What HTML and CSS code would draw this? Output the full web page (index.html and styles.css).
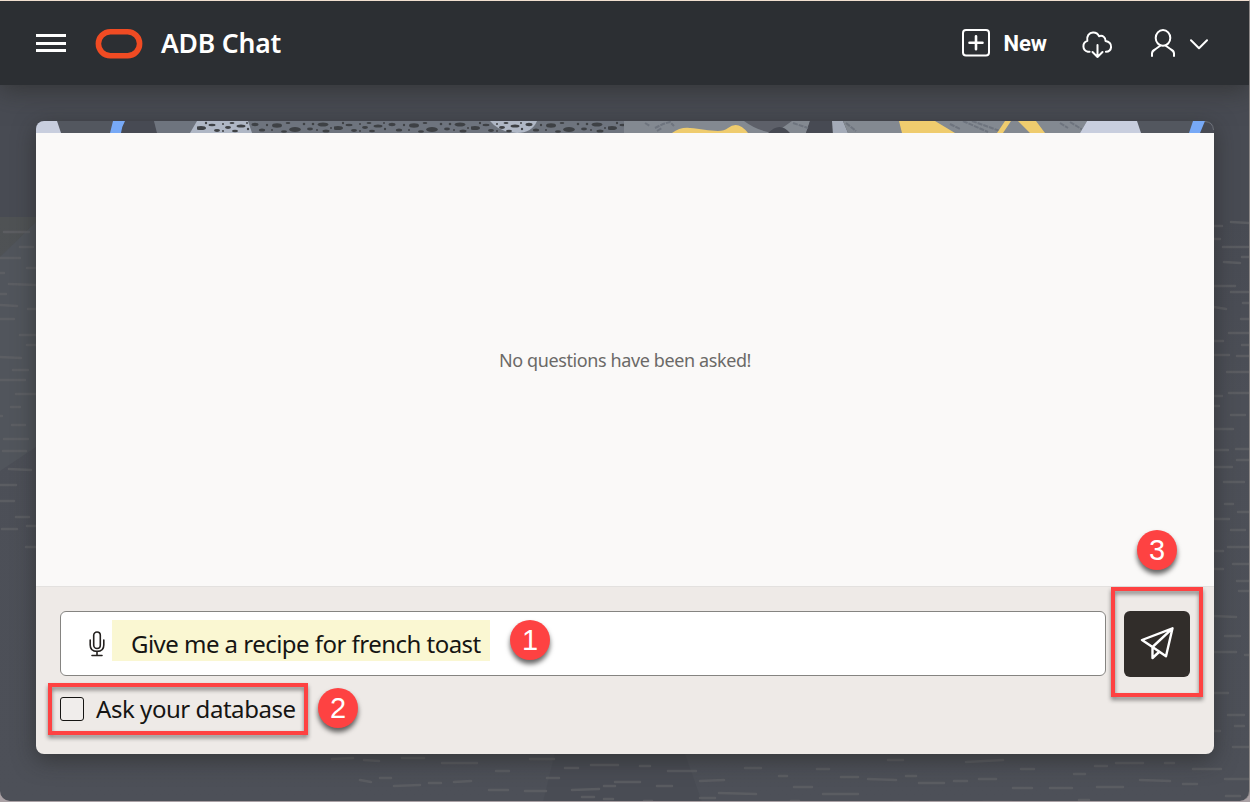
FILE: index.html
```html
<!DOCTYPE html>
<html lang="en">
<head>
<meta charset="utf-8">
<title>ADB Chat</title>
<link rel="stylesheet" href="styles.css">
</head>
<body>
<div class="app">
  <svg class="texture" viewBox="0 0 1250 802" aria-hidden="true">
    <defs><linearGradient id="fade" x1="0" y1="0" x2="0" y2="1"><stop offset="0" stop-color="#4f5254"/><stop offset="1" stop-color="#4e5158"/></linearGradient></defs>
    <path fill="url(#fade)" d="M0 217H36V400H0Z"/>
    <path class="facet" d="M0 257 36 222V447L0 471Z"/>
    <path class="facet-dark" d="M558 740 543 802H702L680 740Z"/>
    <path class="strokes" d="M4 232h25M20 247h13M0 258h20M27 268h9M0 273h4M9 284l27 1M0 294h6M0 305l17 1M28 309h8M0 319h14M20 335h16M27 345h9M0 357l21 1M13 370h15M0 380h25M16 394h20M11 407h9M0 416h2M12 425h13M4 439h24M3 451h23M9 469l22 1M0 485h16M0 501h14M16 517h13M27 526h9M2 529h15M26 547h10
    M1231 222l19 1M1214 226h8M1214 239h6M1223 247h25M1224 262l16 1M1242 257h8M1214 286h21M1231 292h17M1214 307l12 2M1243 303h7M1241 319h9M1229 333h21M1214 341h9M1242 345h8M1214 355h15M1237 356h13M1227 372h22M1229 393h20M1214 396h8M1214 406h5M1231 415h14M1214 429h19M1214 450h14M1236 449h14M1237 460h12M1214 467h18M1224 482h20M1225 504h8M1238 512h12M1214 519h15M1231 530h14M1228 547h22M1214 551h9M1233 564h17M1214 569h9M1237 581h13M1239 591h10M1214 616l22 1M1225 636h15M1214 652h22M1245 655h5M1214 693h14M1228 715h16M1235 726h9M1214 731h6M1233 747h17
    M332 759l21 -1M364 760l15 1M402 758h22M442 763h35M360 780l11 2M380 778h11M394 786l26 -1M429 783h12M454 782l17 -1M496 771h13M530 759h24M489 790h19M525 791h21M420 804l16 1M458 805l30 -1M547 778h12M565 768h13M591 765h27M615 782h25M572 790l27 -1M640 766h10M668 771h28M745 768h16M817 769h12M888 760h15M966 762l37 -2M700 781l24 -1M657 786h15M719 793l37 1M794 787h18M823 794h35M841 777h17M868 779l28 1M906 776h10M919 783h25M954 781h13M979 779h17M1021 769h13M1074 774h11M1095 766h12M1116 763h27M1165 763h9M1193 769h28M1013 788h19M1050 788h22M1097 787h26M1140 780l30 1M1183 784h14M1225 779h25M779 776h8
    M420 804.500h15M458 805l30-1M604 786h11M554 803h10M604 799h9M582 797h12M501 810h28M422 804.500h14M460 804.500h28M700 798h15M644 801h8M791 801h8M893 802h16M929 802h31M983 802h29M1026 807h28M1079 800h10M1129 807h10M1169 807h26M1226 796h14"/>
  </svg>

  <header class="topbar">
    <svg class="menu" viewBox="0 0 30 18"><path d="M0 1.5H30M0 9.5H30M0 16.5H30"/></svg>
    <svg class="logo" viewBox="0 0 48 31"><rect x="3.4" y="3.7" width="41.2" height="24" rx="12"/></svg>
    <h1 class="title">ADB Chat</h1>
    <nav class="actions">
      <svg class="icon plus" viewBox="0 0 28 28"><rect x="1" y="1" width="26" height="25.5" rx="3"/><path class="bold" d="M7.5 13.7H20.5M14 7.200V20.200"/></svg>
      <span class="new">New</span>
      <svg class="icon cloud" viewBox="0 0 32 28"><path d="M8.6 20.7H6.8A5.6 5.6 0 0 1 6.3 9.9C5.400 5 8.200 1.600 12 1.400c2.800-.1 5 1.400 6 3.800 3.700-1.200 6.700 1.100 6.500 4.700 3.500.6 5.900 3 5.600 6.200-.3 2.900-2.300 4.600-5.200 4.700M16.500 14V26M11.500 21l5 5 5-5"/></svg>
      <svg class="icon user" viewBox="0 0 26 28"><ellipse cx="13" cy="8.9" rx="7.3" ry="7.9"/><path d="M2 27V24.500Q2 22 5 20.500L10.500 16.500M24 27V24.500Q24 22 21 20.500L15.500 16.500"/></svg>
      <svg class="icon chevron" viewBox="0 0 18 11"><path d="M1 1.300 9 9.300 17 1.300"/></svg>
    </nav>
  </header>

  <main class="card">
    <svg class="ribbon" viewBox="36 121 1178 12" preserveAspectRatio="none">
      <defs>
        <pattern id="pebbles" width="137" height="12" x="197" y="121" patternUnits="userSpaceOnUse">
          <g fill="#3e4145"><ellipse cx="4" cy="7" rx="5" ry="2"/><ellipse cx="15" cy="4" rx="3.5" ry="1.2"/><ellipse cx="20" cy="9.5" rx="3" ry="1.4"/><ellipse cx="31" cy="6.5" rx="3" ry="1.4"/><ellipse cx="38" cy="10" rx="3" ry="1.3"/><ellipse cx="44" cy="5" rx="4.5" ry="1.6"/><ellipse cx="35" cy="2" rx="2.5" ry="1"/><ellipse cx="58" cy="3.5" rx="3.5" ry="1.7"/><ellipse cx="65" cy="9" rx="3.2" ry="1.6"/><ellipse cx="80" cy="4.5" rx="5" ry="2.2"/><ellipse cx="98" cy="8.5" rx="5.8" ry="2.6"/><ellipse cx="87" cy="10.5" rx="3" ry="1.2"/><ellipse cx="91" cy="2" rx="2.4" ry="1"/><ellipse cx="113" cy="8" rx="3" ry="1.4"/><ellipse cx="126" cy="3.5" rx="5.5" ry="2"/><ellipse cx="129" cy="10" rx="3.5" ry="1.5"/><circle cx="9" cy="2" r="1.2"/><circle cx="26" cy="3" r="1"/><circle cx="26" cy="10" r="1"/><circle cx="51" cy="8" r="1.2"/><circle cx="50" cy="2" r="1"/><circle cx="70" cy="4" r="1.2"/><circle cx="75" cy="9" r="1"/><circle cx="107" cy="3" r="1.3"/><circle cx="116" cy="3" r="1.3"/><circle cx="120" cy="9" r="1"/><circle cx="134" cy="7" r="1"/></g>
        </pattern>
      </defs>
      <path fill="#53575f" d="M36 121H1214V133H36Z"/>
      <path fill="#c8cede" d="M36 121H57L61 133H36Z"/>
      <path fill="#474a53" d="M120 121H154L157 133H110Z"/>
      <path fill="#77a9f6" d="M113 121H125Q122 126 121 133H110Z"/>
      <path fill="#6e747e" d="M154 121H630V133H157Z"/>
      <path fill="#afb7c5" d="M197 121H248L252 133H190Z"/>
      <path fill="#afb7c5" d="M490 121H537Q532 133 517 133 499 132 490 121Z"/>
      <path fill="url(#pebbles)" d="M197 121H624V133H197Z"/>
      <path fill="#838991" d="M624 121H810L806 133H624Z"/>
      <path fill="#5d6069" d="M744 121H792L775 133Q759 132 744 121Z"/>
      <path fill="#474a53" d="M768 133Q780 121 790 133ZM810 121H832V133H806Z"/>
      <path fill="#efcc6e" d="M672 133Q680 127 690 128C705 129 722 134 728 128Q738 120 748 133Z"/>
      <path class="hatch" d="M645 123l5 3M655 128l8-4 7-2 4 4M657 131l5-3M793 123l15 5"/>
      <path fill="#a4abb8" d="M832 121H843L848 133H833Z"/>
      <path fill="#838991" d="M843 121H1087L1080 133H848Z"/>
      <path class="hatch" d="M846 123l10 8M950 124l10 5M963 121l25 11M972 121l28 10M1060 123l8 5M1070 122l13 8"/>
      <path fill="#efcc6e" d="M899 121H935L955 133H902ZM1005 121H1011L1003 133H997ZM1018 121H1036L1045 133H1030Z"/>
      <path fill="#c8cede" d="M1087 121H1137L1141 133H1080Z"/>
      <path fill="#474a53" d="M1200 121H1214V133H1198Z"/>
      <path fill="#77a9f6" d="M1193 121H1205L1200 133H1189Z"/>
      <path class="corner" d="M1205 121.5Q1213 122 1213.5 130"/>
    </svg>
    <section class="conversation">No questions have been asked!</section>
    <footer class="composer">
      <div class="ask-row">
        <div class="field">
          <svg class="mic" viewBox="0 0 16 26"><rect x="4.7" y="1" width="6.6" height="16.5" rx="3.3"/><path d="M1.2 9V14Q1.2 20.4 8 20.4T14.8 14V9M8 20.5V24.5M3 24.5H13"/></svg>
          <span class="prompt">Give me a recipe for french toast</span>
          <span class="badge badge-one">1</span>
        </div>
        <div class="send">
          <svg viewBox="0 0 34 34"><path d="M2 13 32.5 1.3 26 29.3 12.5 20ZM12.5 20 32.5 1.3M12.5 20V31L19 25"/></svg>
        </div>
      </div>
      <label class="option"><span class="box"></span><span class="option-text">Ask your database</span></label>
    </footer>
  </main>

  <div class="outline outline-option"></div>
  <div class="outline outline-send"></div>
  <span class="badge badge-two">2</span>
  <span class="badge badge-three">3</span>
</div>
</body>
</html>
```
FILE: styles.css
```css
* { box-sizing: border-box; }
body { margin: 0; background: #aaa1a5; font-family: "Noto Sans", "Open Sans", sans-serif; }
.app {
  position: relative; width: 1250px; height: 801px; overflow: hidden;
  background: linear-gradient(#484b53 0, #484b53 217px, #4c4f57 400px, #4d5058 100%);
  border-top: 1px solid #f1dfd0; border-right: 1px solid #8d8988;
  border-radius: 0 0 10px 10px;
}
.texture { position: absolute; left: 0; top: -1px; width: 1250px; height: 802px; }
.facet { fill: #51555c; }
.facet-dark { fill: #494c54; }
.strokes { fill: none; stroke: #606265; stroke-width: 2.6; stroke-linecap: round; opacity: .75; }

.topbar {
  position: relative; height: 84px; display: flex; align-items: center;
  padding: 0 41px 0 36px; background: #2c2f33; color: #fff;
  box-shadow: 0 5px 24px rgba(40, 40, 36, .6);
}
.topbar svg { fill: none; stroke: #fff; flex: none; }
.menu { width: 30px; height: 18px; stroke-width: 3; }
.topbar .logo { width: 48px; height: 31px; margin: 1px 18px 0 29px; stroke: #f04b23; stroke-width: 5.6; }
.title { margin: 0; font-size: 26.5px; line-height: 36px; font-weight: 600; letter-spacing: -.2px; white-space: nowrap; }
.actions { margin-left: auto; display: flex; align-items: center; }
.icon { stroke-width: 2; stroke-linecap: round; stroke-linejoin: round; }
.bold { stroke-width: 2.6; }
.plus { width: 28px; height: 28px; }
.new { margin: 2px 34px 0 13px; font-family: Roboto, sans-serif; font-size: 22px; line-height: 28px; font-weight: 700; }
.cloud { width: 32px; height: 28px; margin: 3px 37px 0 0; }
.user { width: 26px; height: 28px; margin-right: 14px; }
.chevron { width: 18px; height: 11px; margin-top: 2px; }

.card {
  position: relative; display: flex; flex-direction: column;
  width: 1178px; height: 633px; margin: 36px 0 0 36px;
  border-radius: 8px; overflow: hidden;
  box-shadow: 0 6px 22px rgba(35, 35, 32, .55);
}
.ribbon { display: block; width: 1178px; height: 12px; flex: none; }
.hatch { fill: none; stroke: #6e747e; stroke-width: 2; stroke-dasharray: 5 1; }
.corner { fill: none; stroke: #777a80; stroke-width: .8; }
.conversation {
  flex: 1; display: flex; align-items: center; justify-content: center;
  background: #faf9f8; color: #6b6967; font-size: 18px; letter-spacing: -.39px;
}
.composer { height: 168px; flex: none; padding: 24px 24px 0; background: #eeeae7; border-top: 1px solid #e3e1df; }
.ask-row { display: flex; gap: 18px; }
.field {
  width: 1046px; height: 65px; display: flex; align-items: flex-start; padding: 8px 0 0 28px;
  background: #fff; border: 1px solid #858481; border-radius: 6px;
}
.mic { width: 16px; height: 26px; margin: 11px 7px 0 0; fill: none; stroke: #24211f; stroke-width: 1.6; stroke-linecap: round; }
.prompt {
  width: 378px; height: 41px; padding-left: 19px; line-height: 48px; background: #faf7d2;
  color: #161513; font-size: 24px; letter-spacing: -.53px; white-space: nowrap;
}
.send { width: 66px; height: 66px; display: flex; align-items: center; justify-content: center; background: #312d2a; border-radius: 6px; }
.send svg { width: 34px; height: 34px; fill: none; stroke: #fff; stroke-width: 2.4; stroke-linejoin: round; }
.option { display: flex; align-items: center; height: 24px; margin-top: 20px; }
.box { width: 24px; height: 24px; border: 1px solid #161513; border-radius: 3px; background: #f0edeb; }
.option-text { margin-left: 12px; font-size: 24px; line-height: 24px; letter-spacing: -.45px; color: #161513; white-space: nowrap; }

.outline { position: absolute; border: 4px solid #fe4242; filter: drop-shadow(0 3px 2px rgba(0, 0, 0, .45)); }
.outline-option { left: 48px; top: 682px; width: 260px; height: 52px; }
.outline-send { left: 1111px; top: 586px; width: 92px; height: 110px; }
.badge {
  width: 40px; height: 40px; border-radius: 50%; background: #fe4242; color: #fff;
  font: 29px/41px "Liberation Sans", sans-serif; text-align: center;
  box-shadow: 0 4px 5px rgba(0, 0, 0, .6);
}
.badge-one { margin-left: 20px; }
.badge-two { position: absolute; left: 318px; top: 687px; }
.badge-three { position: absolute; left: 1137px; top: 529px; }
```
